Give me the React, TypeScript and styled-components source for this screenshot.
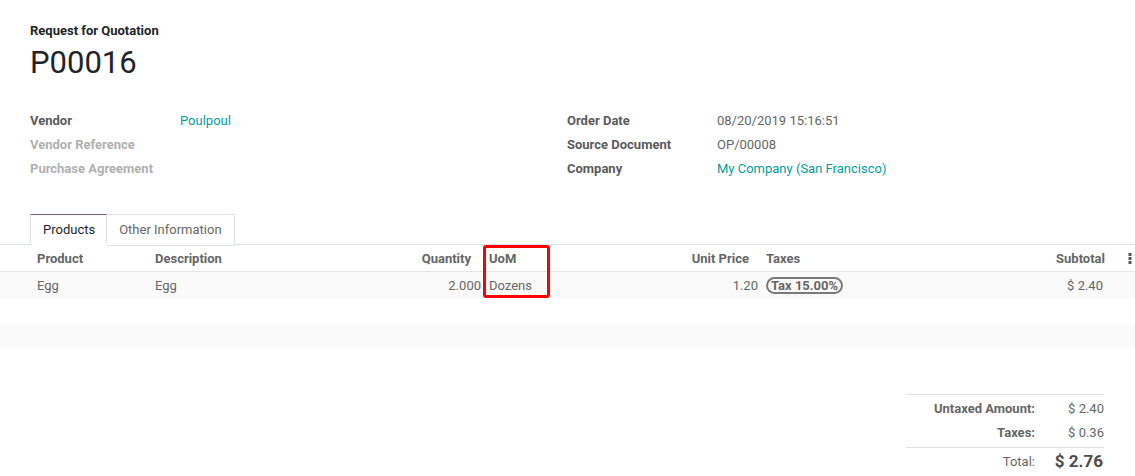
import React from "react";
import styled, { createGlobalStyle } from "styled-components";

const GlobalStyle = createGlobalStyle`
  html, body { margin: 0; padding: 0; background: #ffffff; }
  body {
    font-family: Roboto, "Noto Sans", "Liberation Sans", sans-serif;
    font-size: 13px;
    color: #4c4c4c;
    overflow: hidden;
  }
  * { box-sizing: border-box; }
`;

const Sheet = styled.div`
  width: 1135px;
  padding-top: 22px;
`;

const TitleBlock = styled.div`
  padding: 0 30px;
`;

const Subtitle = styled.div`
  font-size: 13px;
  font-weight: 700;
  line-height: 18px;
  color: #212529;
`;

const Name = styled.h1`
  margin: 5px 0 0;
  font-size: 31px;
  font-weight: 400;
  line-height: 36px;
  color: #212529;
`;

const Groups = styled.div`
  margin-top: 27px;
  padding-left: 30px;
  display: grid;
  grid-template-columns: 537px 1fr;
`;

const Group = styled.div`
  display: grid;
  grid-template-columns: 150px 1fr;
  grid-auto-rows: 24px;
  align-items: center;
`;

const Label = styled.div<{ $muted?: boolean }>`
  font-weight: 700;
  color: ${(p) => (p.$muted ? "#b0b0b0" : "#5b5b5b")};
`;

const Value = styled.div<{ $link?: boolean }>`
  color: ${(p) => (p.$link ? "#00A09D" : "#666666")};
`;

const Notebook = styled.div`
  margin-top: 34px;
`;

const Nav = styled.div`
  display: flex;
  padding-left: 30px;
  border-bottom: 1px solid #dee2e6;
  height: 31px;
`;

const Tab = styled.div<{ $active?: boolean }>`
  height: 32px;
  padding: ${(p) => (p.$active ? "0 11px 0 12px" : "0 12px 0 12px")};
  line-height: 30px;
  border: 1px solid #dee2e6;
  border-left-width: ${(p) => (p.$active ? "1px" : "0")};
  border-top-color: ${(p) => (p.$active ? "#875A7B" : "#dee2e6")};
  border-bottom-color: ${(p) => (p.$active ? "#ffffff" : "#dee2e6")};
  background: #ffffff;
  color: ${(p) => (p.$active ? "#212529" : "#666666")};
  position: relative;
  z-index: 1;
`;

const TableWrap = styled.div`
  position: relative;
`;

const COLS = "147px 235px 100px 180px 97px 240px 106px 30px";

const HeadRow = styled.div`
  display: grid;
  grid-template-columns: ${COLS};
  height: 27px;
  align-items: center;
  border-bottom: 1px solid #e4e4e4;
  box-shadow: 0 1px 2px rgba(0, 0, 0, 0.04);
  font-weight: 700;
  color: #666666;
`;

const Row = styled.div<{ $shade?: boolean; $h?: number }>`
  display: grid;
  grid-template-columns: ${COLS};
  height: ${(p) => p.$h ?? 26}px;
  align-items: center;
  background: ${(p) => (p.$shade ? "#fafafa" : "#ffffff")};
  color: #666666;
`;

const Cell = styled.div<{ $align?: "left" | "right"; $pl?: number; $pr?: number }>`
  text-align: ${(p) => p.$align || "left"};
  padding-left: ${(p) => p.$pl ?? 0}px;
  padding-right: ${(p) => p.$pr ?? 0}px;
  white-space: nowrap;
  display: flex;
  justify-content: ${(p) => (p.$align === "right" ? "flex-end" : "flex-start")};
  align-items: center;
`;

const Badge = styled.span`
  display: inline-block;
  border: 2px solid #7a7a7a;
  border-radius: 10px;
  padding: 0 3px;
  height: 17px;
  line-height: 13px;
  font-weight: 700;
  color: #666666;
`;

const Highlight = styled.div`
  position: absolute;
  left: 483px;
  top: 0;
  width: 67px;
  height: 53px;
  border: 3px solid #ff0000;
  border-radius: 3px;
  pointer-events: none;
`;

const Totals = styled.div`
  margin: 45px 31px 0 auto;
  width: 198px;
  border-top: 1px solid #dee2e6;
  padding-top: 1px;
`;

const TotalLine = styled.div<{ $sep?: boolean }>`
  display: grid;
  grid-template-columns: 129px 69px;
  height: ${(p) => (p.$sep ? "27px" : "24px")};
  align-items: center;
  ${(p) => (p.$sep ? "border-top: 1px solid #dee2e6; margin-top: 3px;" : "")}
`;

const TotalLabel = styled.div<{ $plain?: boolean }>`
  text-align: right;
  font-weight: ${(p) => (p.$plain ? 400 : 700)};
  color: #666666;
`;

const TotalValue = styled.div<{ $big?: boolean }>`
  text-align: right;
  padding-right: ${(p) => (p.$big ? "1px" : "0")};
  color: ${(p) => (p.$big ? "#4c4c4c" : "#666666")};
  font-weight: ${(p) => (p.$big ? 700 : 400)};
  font-size: ${(p) => (p.$big ? "17px" : "13px")};
`;

const Kebab = () => (
  <svg width="4" height="11" viewBox="0 0 4 11">
    <rect x="0.5" y="0" width="3" height="3" fill="#555" />
    <rect x="0.5" y="4" width="3" height="3" fill="#555" />
    <rect x="0.5" y="8" width="3" height="3" fill="#555" />
  </svg>
);

export default function App() {
  return (
    <>
      <GlobalStyle />
      <Sheet>
        <TitleBlock>
          <Subtitle>Request for Quotation</Subtitle>
          <Name>P00016</Name>
        </TitleBlock>
        <Groups>
          <Group>
            <Label>Vendor</Label>
            <Value $link>Poulpoul</Value>
            <Label $muted>Vendor Reference</Label>
            <Value />
            <Label $muted>Purchase Agreement</Label>
            <Value />
          </Group>
          <Group>
            <Label>Order Date</Label>
            <Value>08/20/2019 15:16:51</Value>
            <Label>Source Document</Label>
            <Value>OP/00008</Value>
            <Label>Company</Label>
            <Value $link>My Company (San Francisco)</Value>
          </Group>
        </Groups>
        <Notebook>
          <Nav>
            <Tab $active>Products</Tab>
            <Tab>Other Information</Tab>
          </Nav>
          <TableWrap>
            <HeadRow>
              <Cell $pl={37}>Product</Cell>
              <Cell $pl={8}>Description</Cell>
              <Cell $align="right" $pr={11}>Quantity</Cell>
              <Cell $pl={7}>UoM</Cell>
              <Cell $align="right" $pr={10}>Unit Price</Cell>
              <Cell $pl={7}>Taxes</Cell>
              <Cell $align="right" $pr={0}>Subtotal</Cell>
              <Cell $align="right" $pr={3}>
                <Kebab />
              </Cell>
            </HeadRow>
            <Row $shade>
              <Cell $pl={37}>Egg</Cell>
              <Cell $pl={8}>Egg</Cell>
              <Cell $align="right" $pr={1}>2.000</Cell>
              <Cell $pl={7}>Dozens</Cell>
              <Cell $align="right" $pr={1}>1.20</Cell>
              <Cell $pl={7}>
                <Badge>Tax 15.00%</Badge>
              </Cell>
              <Cell $align="right" $pr={2}>$ 2.40</Cell>
              <Cell />
            </Row>
            <Row $h={25} />
            <Row $shade />
            <Highlight />
          </TableWrap>
        </Notebook>
        <Totals>
          <TotalLine>
            <TotalLabel>Untaxed Amount:</TotalLabel>
            <TotalValue>$ 2.40</TotalValue>
          </TotalLine>
          <TotalLine>
            <TotalLabel>Taxes:</TotalLabel>
            <TotalValue>$ 0.36</TotalValue>
          </TotalLine>
          <TotalLine $sep>
            <TotalLabel $plain>Total:</TotalLabel>
            <TotalValue $big>$ 2.76</TotalValue>
          </TotalLine>
        </Totals>
      </Sheet>
    </>
  );
}
